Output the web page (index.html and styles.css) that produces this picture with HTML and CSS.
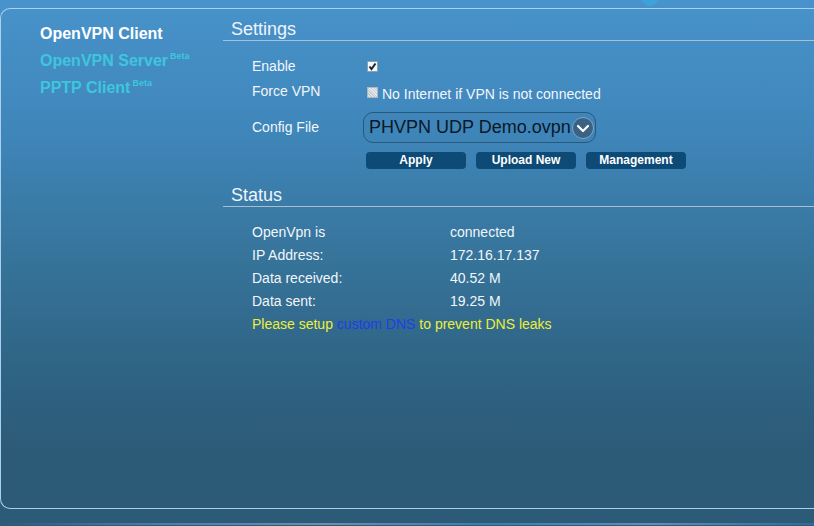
FILE: index.html
```html
<!DOCTYPE html>
<html lang="en">
<head>
    <meta charset="UTF-8">
    <meta name="viewport" content="width=device-width, initial-scale=1.0">
    <title>VPN</title>
    <link rel="stylesheet" href="styles.css">
</head>
<body>
    <div class="top-strip">
        <svg class="logo-tail" width="24" height="8" viewBox="0 0 24 8">
            <path d="M3 0 H21 Q17 6 12 6 Q7 6 3 0 Z" fill="#3aa8e0" opacity="0.7"/>
        </svg>
    </div>

    <div class="panel">
        <div class="sidebar">
            <a href="#" class="menu-item active">OpenVPN Client</a>
            <a href="#" class="menu-item">OpenVPN Server<sup>Beta</sup></a>
            <a href="#" class="menu-item">PPTP Client<sup>Beta</sup></a>
        </div>

        <div class="main">
            <h2 class="section-title">Settings</h2>
            <div class="rows">
                <div class="row row-enable">
                    <span class="label">Enable</span>
                    <span class="check checked">
                        <svg width="9" height="9" viewBox="0 0 9 9"><path d="M1.5 4.5 L3.5 7 L7.5 1.5" fill="none" stroke="#1a2230" stroke-width="2"/></svg>
                    </span>
                </div>
                <div class="row row-force">
                    <span class="label">Force VPN</span>
                    <span class="check disabled"></span>
                    <span class="check-text">No Internet if VPN is not connected</span>
                </div>
                <div class="row row-config">
                    <span class="label">Config File</span>
                    <div class="select">
                        <span class="select-value">PHVPN UDP Demo.ovpn</span>
                        <span class="select-arrow">
                            <svg width="22" height="22" viewBox="0 0 22 22">
                                <circle cx="11" cy="11" r="10.5" fill="#3b6283" stroke="#7aa6c6" stroke-width="1"/>
                                <path d="M6 9 L11 14 L16 9" fill="none" stroke="#ffffff" stroke-width="2.2" stroke-linecap="round" stroke-linejoin="round"/>
                            </svg>
                        </span>
                    </div>
                </div>
                <div class="buttons">
                    <button type="button">Apply</button>
                    <button type="button">Upload New</button>
                    <button type="button">Management</button>
                </div>
            </div>

            <h2 class="section-title">Status</h2>
            <div class="status">
                <div class="status-row"><span class="status-label">OpenVpn is</span><span>connected</span></div>
                <div class="status-row"><span class="status-label">IP Address:</span><span>172.16.17.137</span></div>
                <div class="status-row"><span class="status-label">Data received:</span><span>40.52 M</span></div>
                <div class="status-row"><span class="status-label">Data sent:</span><span>19.25 M</span></div>
                <div class="status-row warning">Please setup <a href="#">custom DNS</a> to prevent DNS leaks</div>
            </div>
        </div>
    </div>

    <div class="footer-strip"></div>
</body>
</html>
```

FILE: styles.css
```css
body {
    margin: 0;
    padding: 0;
    font-family: "Liberation Sans", Arial, sans-serif;
    color: #f2f6fa;
    background: #2c5b77;
    background-image: linear-gradient(180deg, #4893cb 0%, #3f86ba 25%, #367399 50%, #2f6485 70%, #2c5b77 85%, #2c5b77 100%);
    height: 526px;
    overflow: hidden;
}
.top-strip {
    height: 8px;
    padding-left: 638px;
}
.logo-tail {
    display: block;
}
.panel {
    display: flex;
    height: 499px;
    border: 1px solid #a9d0ee;
    border-right: none;
    border-radius: 10px 0 0 10px;
}
.sidebar {
    width: 183px;
    padding: 11px 0 0 39px;
    display: flex;
    flex-direction: column;
}
.menu-item {
    font-size: 16px;
    font-weight: bold;
    line-height: 27px;
    color: #3ec6de;
    text-decoration: none;
    white-space: nowrap;
}
.menu-item.active {
    color: #ffffff;
}
.menu-item sup {
    font-size: 9px;
    margin-left: 2px;
    vertical-align: 7px;
    line-height: 0;
}
.main {
    flex: 1;
}
.section-title {
    margin: 0;
    padding: 9px 0 0 8px;
    font-size: 18px;
    font-weight: normal;
    line-height: 22px;
    color: #eef4fa;
    border-bottom: 1px solid #a7bfd1;
    height: 22px;
}
.rows {
    padding: 13px 0 6px 29px;
    font-size: 14px;
}
.row {
    display: flex;
    align-items: center;
}
.row-enable {
    height: 24px;
}
.row-force {
    height: 29px;
}
.row-config {
    margin-top: 4px;
    height: 33px;
}
.label {
    width: 115px;
    flex-shrink: 0;
}
.row-force .label {
    margin-top: -3px;
}
.row-config .label {
    margin-top: -2px;
}
.check {
    width: 11px;
    height: 11px;
    box-sizing: border-box;
    display: inline-flex;
    align-items: center;
    justify-content: center;
}
.check.checked {
    background: #f4f6f8;
    border: 1px solid #8aa0b4;
}
.check.disabled {
    background: #d7dde2;
    border: 1px solid #aeb8c0;
    background-image: repeating-linear-gradient(45deg, #c4ccd3 0 1px, #e4e8ec 1px 2px);
}
.check-text {
    margin-left: 4px;
    margin-top: 3px;
}
.select {
    margin-left: -4px;
    width: 233px;
    height: 31px;
    box-sizing: border-box;
    border: 1px solid #28587c;
    border-radius: 10px;
    display: flex;
    align-items: center;
    padding-left: 5px;
    background: rgba(60, 130, 180, 0.15);
}
.select-value {
    font-size: 18px;
    color: #0b1826;
    white-space: nowrap;
}
.select-arrow {
    margin-left: 1px;
    display: flex;
}
.buttons {
    display: flex;
    gap: 10px;
    padding-left: 114px;
    margin-top: 8px;
}
button {
    width: 100px;
    height: 17px;
    padding: 0;
    border: none;
    border-radius: 4px;
    background: #0d4a76;
    color: #ffffff;
    font-family: "Liberation Sans", Arial, sans-serif;
    font-size: 12px;
    font-weight: bold;
    line-height: 17px;
    cursor: pointer;
}
button:hover {
    background: #0a3d63;
}
.status {
    padding: 14px 0 0 29px;
    font-size: 14px;
}
.status-row {
    display: flex;
    line-height: 23px;
}
.status-label {
    width: 198px;
}
.warning {
    display: block;
    color: #eeee3a;
}
.warning a {
    color: #1e3ee6;
    text-decoration: none;
}
.footer-strip {
    height: 2px;
    margin-top: 14px;
    background: linear-gradient(90deg, #2c5b77 0%, #4a7fa8 20%, #6f8fa8 40%, #3d7ab0 60%, #5f90b8 80%, #2f6a98 100%);
}
```
